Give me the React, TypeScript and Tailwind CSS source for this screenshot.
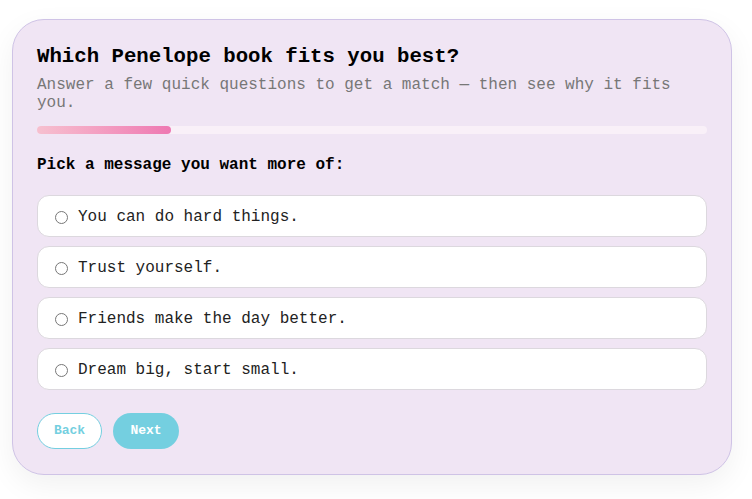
import React from "react";

const options = [
  "You can do hard things.",
  "Trust yourself.",
  "Friends make the day better.",
  "Dream big, start small.",
];

export default function App() {
  return (
    <div className="min-h-[499px] w-[752px] bg-white pt-[19px] pl-[12px]" style={{ fontFamily: '"Courier New", "Liberation Mono", monospace' }}>
      <div className="w-[720px] rounded-[32px] border border-[#cfc3e6] bg-[#f0e5f4] px-6 pt-6 pb-[25px] shadow-[0_10px_30px_rgba(0,0,0,0.06)]">
        <h1 className="text-[20.7px] font-bold leading-[25px] text-black">Which Penelope book fits you best?</h1>
        <p className="mt-[7px] text-[16px] leading-[18px] text-[#777]">
          Answer a few quick questions to get a match — then see why it fits you.
        </p>
        <div className="mt-[14px] h-2 w-full rounded-full bg-[#f9f0f8]">
          <div className="h-2 rounded-full bg-gradient-to-r from-[#f6c0cf] to-[#ee78b2]" style={{ width: "20%" }} />
        </div>
        <div className="mt-[21px] text-[16px] font-bold leading-[20px] text-black">Pick a message you want more of:</div>
        <div className="mt-[20px] flex flex-col gap-[9px]">
          {options.map((o) => (
            <label key={o} className="flex h-[42px] items-center gap-[10px] rounded-[12px] border border-[#dcd8de] bg-white pl-[17px] pt-[2px] text-[16px] text-[#222]">
              <span className="h-[13px] w-[13px] rounded-full border border-[#777] bg-white" />
              <span>{o}</span>
            </label>
          ))}
        </div>
        <div className="mt-[23px] flex gap-[11px]">
          <button className="h-[36px] w-[65px] rounded-full border border-[#74cfe0] bg-white text-[13px] font-bold text-[#74cfe0]">Back</button>
          <button className="h-[36px] w-[66px] rounded-full bg-[#74cfe0] text-[13px] font-bold text-white">Next</button>
        </div>
      </div>
    </div>
  );
}
